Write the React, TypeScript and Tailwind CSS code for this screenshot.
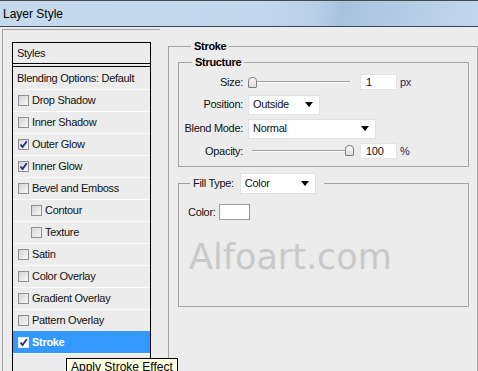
import React from "react";

type Item = { label: string; checked?: boolean; indent?: boolean; selected?: boolean };

const items: Item[] = [
  { label: "Drop Shadow" },
  { label: "Inner Shadow" },
  { label: "Outer Glow", checked: true },
  { label: "Inner Glow", checked: true },
  { label: "Bevel and Emboss" },
  { label: "Contour", indent: true },
  { label: "Texture", indent: true },
  { label: "Satin" },
  { label: "Color Overlay" },
  { label: "Gradient Overlay" },
  { label: "Pattern Overlay" },
  { label: "Stroke", checked: true, selected: true },
];

const CheckBox = ({ checked, light }: { checked?: boolean; light?: boolean }) => (
  <span
    className={
      "flex h-[11px] w-[11px] shrink-0 items-center justify-center border " +
      (light
        ? "border-[#dfe8f5] bg-white"
        : "border-[#8f8f8f] bg-[linear-gradient(135deg,#d6d6d6,#f7f7f7)]")
    }
  >
    {checked && (
      <svg width="9" height="9" viewBox="0 0 9 9">
        <path d="M1.5 4.5 L3.5 7 L7.8 1.2" fill="none" stroke="#1d2a8a" strokeWidth="1.8" />
      </svg>
    )}
  </span>
);

const Arrow = () => (
  <svg width="8" height="5" viewBox="0 0 8 5">
    <polygon points="0,0 8,0 4,5" fill="#000" />
  </svg>
);

const Select = ({ value, width, height }: { value: string; width: string; height: string }) => (
  <div
    className={
      "flex items-center justify-between border border-[#e1e1e1] bg-white pl-[4px] pr-[6px] " +
      width +
      " " +
      height
    }
  >
    <span>{value}</span>
    <Arrow />
  </div>
);

const Thumb = () => (
  <span className="block h-[11px] w-[9px] shrink-0 rounded-t-[4px] rounded-b-[1px] border border-[#7f7f7f] bg-[linear-gradient(#ffffff,#d9d9d9)]" />
);

const Track = () => <span className="block h-[2px] flex-1 border-t border-b border-t-[#9c9c9c] border-b-white" />;

const NumberBox = ({ value }: { value: string }) => (
  <div className="flex h-[16px] w-[37px] items-center border border-[#e3e3e3] bg-white pl-[5px]">{value}</div>
);

export default function App() {
  return (
    <div className="relative h-[371px] w-[478px] overflow-hidden bg-[#ececec] font-['Liberation_Sans',Arial,sans-serif] text-[11px] tracking-[-0.3px] text-[#111]">
      <div className="flex h-[27px] items-center border-t border-b border-t-[#4a4a4a] border-b-[#37485c] bg-[linear-gradient(100deg,#c5d9ef_0%,#c2d7ed_55%,#b8cfe8_66%,#a8c2de_71%,#b2cae4_82%,#c2d7ed_100%)] pl-[3px] text-[12px] tracking-normal text-black">
        Layer Style
      </div>

      <div className="flex">
        <div className="ml-[2px] mt-[2px] h-[400px] w-[158px] border-l border-t border-[#a3a3a3] pl-[9px] pt-[12px]">
          <div className="h-[400px] w-[139px] border border-black">
            <div className="flex h-[24px] items-center border-b-4 border-double border-black pl-[4px]">Styles</div>
            <div className="flex h-[22px] items-center pl-[4px]">Blending Options: Default</div>
            {items.map((it) => (
              <div
                key={it.label}
                className={
                  "flex h-[22px] items-center gap-[3px] border-t " +
                  (it.indent ? "pl-[18px] " : "pl-[5px] ") +
                  (it.selected
                    ? "border-[#3399ff] bg-[#3399ff] font-bold text-white"
                    : "border-[#fbfbfb]")
                }
              >
                <CheckBox checked={it.checked} light={it.selected} />
                <span>{it.label}</span>
              </div>
            ))}
            <div className="border-t border-[#fbfbfb]" />
          </div>
        </div>

        <fieldset className="ml-[8px] mt-[13px] h-[400px] w-[310px] border border-[#a3a3a3] pl-[9px] pr-[8px]">
          <legend className="ml-[13px] px-[3px] font-bold leading-[13px] text-black">Stroke</legend>

          <fieldset className="mt-[3px] border border-[#a3a3a3] pb-[7px]">
            <legend className="ml-[13px] px-[3px] font-bold leading-[13px] text-black">Structure</legend>
            <div className="grid grid-cols-[64px_1fr] items-center gap-x-[5px] gap-y-[4px] pt-[5px]">
              <span className="text-right">Size:</span>
              <div className="flex h-[16px] items-center">
                <div className="flex w-[112px] items-center pr-[10px]">
                  <Thumb />
                  <Track />
                </div>
                <NumberBox value="1" />
                <span className="ml-[3px] text-[#1a2a5a]">px</span>
              </div>

              <span className="text-right">Position:</span>
              <Select value="Outside" width="w-[72px]" height="h-[20px]" />

              <span className="text-right">Blend Mode:</span>
              <Select value="Normal" width="w-[128px]" height="h-[20px]" />

              <span className="text-right">Opacity:</span>
              <div className="flex h-[16px] items-center">
                <div className="flex w-[112px] items-center pl-[4px] pr-[6px]">
                  <Track />
                  <Thumb />
                </div>
                <NumberBox value="100" />
                <span className="ml-[3px] text-[#1a2a5a]">%</span>
              </div>
            </div>
          </fieldset>

          <fieldset className="mt-[6px] h-[134px] border border-[#a3a3a3]">
            <legend className="ml-[11px] flex items-center gap-[6px] pl-[3px] pr-[8px]">
              <span>Fill Type:</span>
              <Select value="Color" width="w-[76px]" height="h-[21px]" />
            </legend>
            <div className="flex items-center gap-[3px] pl-[9px] pt-[10px]">
              <span>Color:</span>
              <span className="block h-[16px] w-[31px] border border-[#9a9a9a] bg-white" />
            </div>
            <div className="mt-[19px] pl-[10px] font-['DejaVu_Sans',sans-serif] text-[35px] leading-[35px] tracking-normal text-[#c9c9c9]">
              Alfoart.com
            </div>
          </fieldset>
        </fieldset>
      </div>

      <div className="absolute left-[66px] top-[358px] border border-black bg-[#ffffe1] px-[4px] pt-[1px] text-[12px] leading-[15px] tracking-normal text-black">
        Apply Stroke Effect
      </div>
    </div>
  );
}
